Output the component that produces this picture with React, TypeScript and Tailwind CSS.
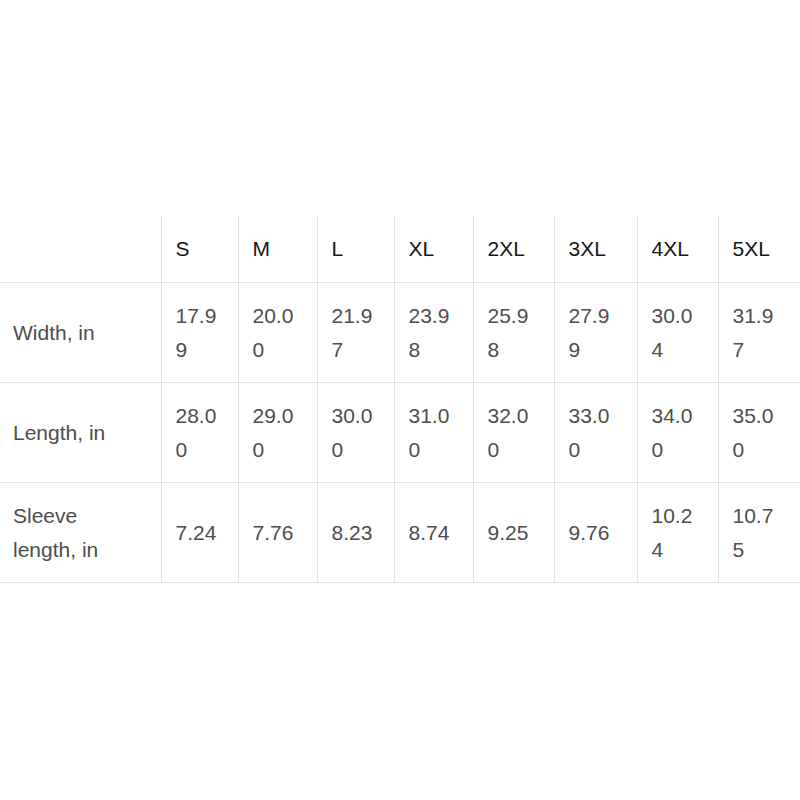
import React from "react";

const sizes = ["S", "M", "L", "XL", "2XL", "3XL", "4XL", "5XL"];

const rows: { label: string; values: string[] }[] = [
  {
    label: "Width, in",
    values: ["17.99", "20.00", "21.97", "23.98", "25.98", "27.99", "30.04", "31.97"],
  },
  {
    label: "Length, in",
    values: ["28.00", "29.00", "30.00", "31.00", "32.00", "33.00", "34.00", "35.00"],
  },
  {
    label: "Sleeve length, in",
    values: ["7.24", "7.76", "8.23", "8.74", "9.25", "9.76", "10.24", "10.75"],
  },
];

// widths of the size columns, border included
const colWidths = [
  "w-[77px]",
  "w-[79px]",
  "w-[77px]",
  "w-[79px]",
  "w-[81px]",
  "w-[83px]",
  "w-[81px]",
  "w-[82px]",
];

const App: React.FC = () => {
  return (
    <div className="w-[800px] h-[800px] bg-white pt-[216px] font-['Liberation_Sans',Arial,sans-serif] text-[21px] leading-[34px]">
      <table className="w-[800px] table-fixed border-collapse">
        <colgroup>
          <col className="w-[161px]" />
          {colWidths.map((w, i) => (
            <col key={i} className={w} />
          ))}
        </colgroup>
        <thead>
          <tr className="border-b border-[#e3e3e3]">
            <th className="pl-[13px] pr-[18px] py-4" />
            {sizes.map((s, i) => (
              <th
                key={s}
                className={`pl-[14px] pr-[18px] py-4 text-left font-normal text-[#161616] border-l border-[#e3e3e3] ${
                  i === sizes.length - 1 ? "border-r" : ""
                }`}
              >
                {s}
              </th>
            ))}
          </tr>
        </thead>
        <tbody>
          {rows.map((row) => (
            <tr key={row.label} className="border-b border-[#e3e3e3]">
              <td className="pl-[13px] pr-[18px] pt-4 pb-[15px] align-middle text-[#4d4d4d]">
                {row.label}
              </td>
              {row.values.map((v, i) => (
                <td
                  key={i}
                  className={`pl-[14px] pr-[18px] pt-4 pb-[15px] align-middle break-all text-[#4d4d4d] border-l border-[#e3e3e3] ${
                    i === row.values.length - 1 ? "border-r" : ""
                  }`}
                >
                  {v}
                </td>
              ))}
            </tr>
          ))}
        </tbody>
      </table>
    </div>
  );
};

export default App;
